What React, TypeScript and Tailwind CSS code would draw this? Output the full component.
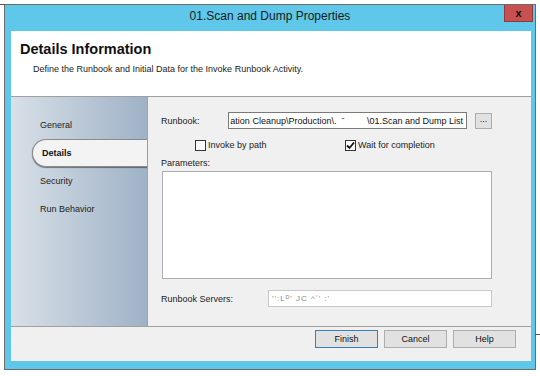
function Check({ checked }: { checked?: boolean }) {
  return (
    <span className="w-[11px] h-[11px] border border-[#333] bg-white flex items-center justify-center">
      {checked && (
        <svg width="9" height="9" viewBox="0 0 9 9">
          <path d="M1 4.5 L3.5 7 L8 1.5" stroke="#111" strokeWidth="1.8" fill="none" />
        </svg>
      )}
    </span>
  );
}

function NavItem({ label, active }: { label: string; active?: boolean }) {
  if (active) {
    return (
      <div className="h-[28px] flex items-center">
        <div className="ml-[21px] flex-1 h-[28px] flex items-center pl-[9px] bg-[#f3f3f3] border border-r-0 border-[#8a8a8a] rounded-l-[14px] shadow-[0_1px_1px_rgba(0,0,0,0.45)] font-bold text-[#111]">
          {label}
        </div>
      </div>
    );
  }
  return <div className="h-[28px] flex items-center pl-[29px] text-[#222]">{label}</div>;
}

function Btn({ label, primary }: { label: string; primary?: boolean }) {
  return (
    <div
      className={
        "w-[63px] h-[18px] flex items-center justify-center bg-[#e1e1e1] border text-[#111] " +
        (primary ? "border-[#3c7fb1]" : "border-[#adadad]")
      }
    >
      {label}
    </div>
  );
}

export default function App() {
  return (
    <div className="w-[540px] h-[376px] bg-white relative overflow-hidden pt-[4px] pl-[4px] font-['Liberation_Sans',Arial,sans-serif] text-[9px] leading-[12px]">
      <div className="absolute left-0 top-[4px] w-[5px] h-px bg-[#555]" />
      <div className="absolute right-0 top-[334px] w-[5px] h-px bg-[#555]" />

      <div className="w-[532px] h-[366px] border border-[#6b6b6b] bg-[#5fc8ea] flex flex-col">
        {/* title bar */}
        <div className="h-[26px] grid grid-cols-[1fr_auto_1fr]">
          <div />
          <div className="pt-[4px] text-[12px] leading-[14px] text-[#1a1a1a]">01.Scan and Dump Properties</div>
          <div className="flex justify-end pr-[2px]">
            <div className="w-[29px] h-[17px] bg-[#c75050] border border-[#8f3b3b] border-t-0 flex items-center justify-center text-[11px] font-bold text-[#111] leading-none">
              x
            </div>
          </div>
        </div>

        {/* client */}
        <div className="ml-[6px] w-[520px] h-[330px] flex flex-col bg-[#f0f0f0]">
          <div className="h-[66px] bg-white border-b border-[#a0a0a0] pt-[10px]">
            <div className="pl-[9px] text-[14.5px] leading-[16px] font-bold text-[#111]">Details Information</div>
            <div className="pl-[22px] mt-[6px] text-[#222]">Define the Runbook and Initial Data for the Invoke Runbook Activity.</div>
          </div>

          <div className="h-[229px] flex">
            <div className="w-[137px] bg-gradient-to-r from-[#d8e0e8] to-[#9fb2c6] border-r border-[#95a6b8] pt-[14px] flex flex-col">
              <NavItem label="General" />
              <NavItem label="Details" active />
              <NavItem label="Security" />
              <NavItem label="Run Behavior" />
            </div>

            <div className="flex-1 pl-[13px] pt-[15px] flex flex-col text-[#222]">
              <div className="h-[17px] flex items-center">
                <div className="w-[67px]">Runbook:</div>
                <div className="w-[239px] h-[17px] bg-white border border-[#7a7a7a] flex items-center justify-end overflow-hidden whitespace-pre pr-[3px] text-[#111]">
                  {"ation Cleanup\\Production\\.  \u02C9         \\01.Scan and Dump List"}
                </div>
                <div className="ml-[8px] w-[17px] h-[16px] bg-[#e1e1e1] border border-[#adadad] flex items-center justify-center text-[#111] leading-none pb-[3px]">
                  ...
                </div>
              </div>

              <div className="mt-[10px] h-[12px] flex items-center">
                <div className="ml-[34px] w-[150px] flex items-center gap-[2px]">
                  <Check />
                  <span>Invoke by path</span>
                </div>
                <div className="flex items-center gap-[2px]">
                  <Check checked />
                  <span>Wait for completion</span>
                </div>
              </div>

              <div className="mt-[6px]">Parameters:</div>
              <div className="mt-[2px] ml-[1px] w-[330px] h-[108px] bg-white border border-[#abadb3]" />

              <div className="mt-[11px] h-[17px] flex items-center">
                <div className="w-[107px]">Runbook Servers:</div>
                <div className="w-[224px] h-[17px] bg-white border border-[#c8c8c8] flex items-center pl-[3px] text-[8px] tracking-[1px] text-[#888]">
                  {"'':L\u1D30' JC ^\u02BC' :'"}
                </div>
              </div>
            </div>
          </div>

          <div className="h-[35px] border-t border-[#a0a0a0] pt-[3px] pr-[15px] flex justify-end gap-[6px]">
            <Btn label="Finish" primary />
            <Btn label="Cancel" />
            <Btn label="Help" />
          </div>
        </div>
      </div>
    </div>
  );
}
